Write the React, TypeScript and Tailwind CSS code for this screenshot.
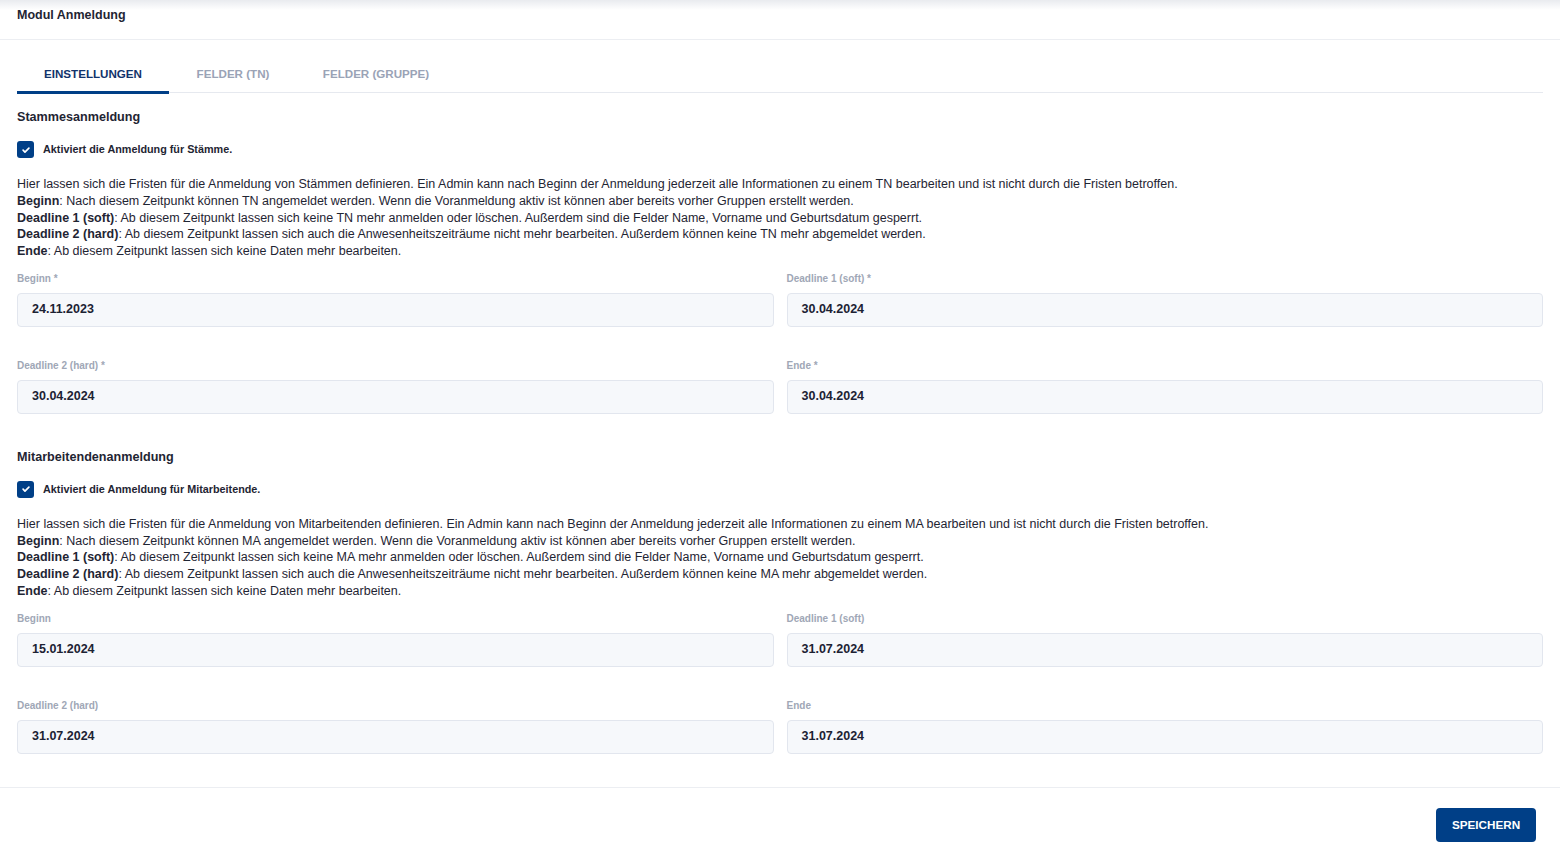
import React from "react";

const Check = () => (
  <span className="flex h-[17px] w-[17px] items-center justify-center rounded-[3px] bg-[#003f87]">
    <svg width="10" height="10" viewBox="0 0 24 24" fill="none" stroke="white" strokeWidth="4" strokeLinecap="round" strokeLinejoin="round">
      <path d="M5 12.5l4.5 4.5L19 7.5" />
    </svg>
  </span>
);

const Field = ({ label, value }: { label: string; value: string }) => (
  <div className="flex flex-col">
    <div className="h-[14px] text-[10px] font-bold leading-[14px] text-[#a0a7b6]">{label}</div>
    <div className="mt-[7px] flex h-[34px] items-center rounded-[4px] border border-[#e2e6ee] bg-[#f6f8fb] px-[14px] text-[12.5px] font-bold text-[#1c2233]">
      {value}
    </div>
  </div>
);

const Section = ({
  title,
  checkLabel,
  who,
  whom,
  fields,
}: {
  title: string;
  checkLabel: string;
  who: string;
  whom: string;
  fields: [string, string][];
}) => (
  <div className="flex flex-col">
    <div className="h-[18px] text-[12.6px] font-bold leading-[18px] text-[#1f2533]">{title}</div>
    <div className="mt-[15px] flex items-center gap-[9px]">
      <Check />
      <span className="text-[10.8px] font-bold text-[#1f2533]">{checkLabel}</span>
    </div>
    <div className="mt-[18px] text-[12.5px] leading-[16.75px] text-[#1f2533]">
      <div>
        Hier lassen sich die Fristen für die Anmeldung von {whom} definieren. Ein Admin kann nach Beginn der Anmeldung jederzeit alle Informationen zu einem {who} bearbeiten und ist nicht durch die Fristen betroffen.
      </div>
      <div>
        <b className="font-bold">Beginn</b>: Nach diesem Zeitpunkt können {who} angemeldet werden. Wenn die Voranmeldung aktiv ist können aber bereits vorher Gruppen erstellt werden.
      </div>
      <div>
        <b className="font-bold">Deadline 1 (soft)</b>: Ab diesem Zeitpunkt lassen sich keine {who} mehr anmelden oder löschen. Außerdem sind die Felder Name, Vorname und Geburtsdatum gesperrt.
      </div>
      <div>
        <b className="font-bold">Deadline 2 (hard)</b>: Ab diesem Zeitpunkt lassen sich auch die Anwesenheitszeiträume nicht mehr bearbeiten. Außerdem können keine {who} mehr abgemeldet werden.
      </div>
      <div>
        <b className="font-bold">Ende</b>: Ab diesem Zeitpunkt lassen sich keine Daten mehr bearbeiten.
      </div>
    </div>
    <div className="mt-[12px] grid grid-cols-2 gap-x-[13px] gap-y-[32px]">
      {fields.map(([l, v]) => (
        <Field key={l} label={l} value={v} />
      ))}
    </div>
  </div>
);

export default function App() {
  return (
    <div className="flex h-[853px] w-[1560px] flex-col bg-white font-['Liberation_Sans',Arial,sans-serif]">
      <div className="relative h-[40px] shrink-0 border-b border-[#eceef2]">
        <div className="pointer-events-none absolute inset-x-0 top-0 h-[10px] bg-gradient-to-b from-[#e9ebef] to-white" />
        <div className="relative px-[17px] pt-[7px] text-[12.5px] font-bold leading-[17px] text-[#1f2533]">Modul Anmeldung</div>
      </div>
      <div className="px-[17px]">
        <div className="mt-[15px] flex h-[38px] border-b border-[#e6e9ef]">
          <div className="relative flex w-[152px] items-center justify-center text-[11.6px] font-bold text-[#12336b]">
            EINSTELLUNGEN
            <span className="absolute inset-x-0 -bottom-[2px] h-[3px] bg-[#003f87]" />
          </div>
          <div className="flex w-[128px] items-center justify-center text-[11.6px] font-bold text-[#9aa3b6]">FELDER (TN)</div>
          <div className="flex w-[158px] items-center justify-center text-[11.6px] font-bold text-[#9aa3b6]">FELDER (GRUPPE)</div>
        </div>
        <div className="mt-[15px]">
          <Section
            title="Stammesanmeldung"
            checkLabel="Aktiviert die Anmeldung für Stämme."
            who="TN"
            whom="Stämmen"
            fields={[
              ["Beginn *", "24.11.2023"],
              ["Deadline 1 (soft) *", "30.04.2024"],
              ["Deadline 2 (hard) *", "30.04.2024"],
              ["Ende *", "30.04.2024"],
            ]}
          />
          <div className="mt-[34px]">
            <Section
              title="Mitarbeitendenanmeldung"
              checkLabel="Aktiviert die Anmeldung für Mitarbeitende."
              who="MA"
              whom="Mitarbeitenden"
              fields={[
                ["Beginn", "15.01.2024"],
                ["Deadline 1 (soft)", "31.07.2024"],
                ["Deadline 2 (hard)", "31.07.2024"],
                ["Ende", "31.07.2024"],
              ]}
            />
          </div>
        </div>
      </div>
      <div className="mt-[33px] flex justify-end border-t border-[#eceef2] px-[24px] pt-[20px]">
        <button className="h-[34px] w-[100px] rounded-[4px] bg-[#003f87] text-[11.7px] font-bold text-white">SPEICHERN</button>
      </div>
    </div>
  );
}
